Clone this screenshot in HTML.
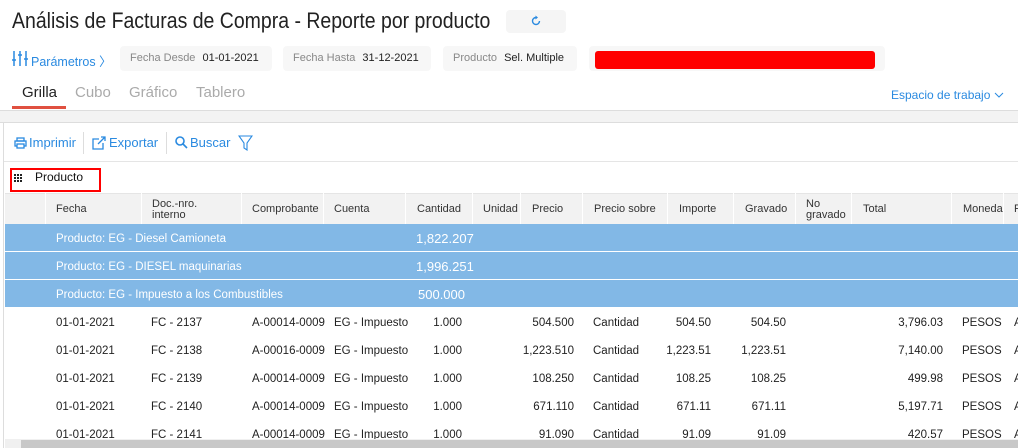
<!DOCTYPE html>
<html><head><meta charset="utf-8"><style>
*{box-sizing:border-box;margin:0;padding:0}
body{width:1018px;height:448px;overflow:hidden;background:#fff;font-family:"Liberation Sans",sans-serif;position:relative;color:#222}
.a{position:absolute;white-space:nowrap}
.chip{position:absolute;top:46px;height:25px;background:#f7f7f7;border-radius:4px;font-size:11px;line-height:25px;padding-left:10px;color:#888}
.chip b{font-weight:normal;color:#222;margin-left:4px}
.tab{position:absolute;top:84px;font-size:15px;color:#aaa}
.tb{position:absolute;top:135px;font-size:13px;color:#2a8ae0}
.h{position:absolute;top:193px;height:31px;font-size:11px;color:#333;line-height:33px;border-left:1px solid #fff}
.h.two{line-height:11px;padding-top:6px}
.g{position:absolute;left:5px;width:1013px;height:27px;background:#82b8e6;color:#fff;font-size:11.5px;line-height:30px}
.r{position:absolute;font-size:11.5px;color:#222;margin-top:1px}
</style></head><body>
<div class="a" style="left:12px;top:8px;font-size:22px;color:#222;transform:scaleX(0.885);transform-origin:0 0">Análisis de Facturas de Compra - Reporte por producto</div>
<div class="a" style="left:506px;top:10px;width:60px;height:23px;background:#f5f5f5;border-radius:4px"></div>
<svg class="a" style="left:530px;top:15px" width="12" height="12" viewBox="0 0 12 12"><path d="M9.5 6A3.5 3.5 0 1 1 6 2.5" fill="none" stroke="#2a8ae0" stroke-width="1.4"/><path d="M5.5 0.5L8 2.5L5.5 4.5z" fill="#2a8ae0"/></svg>
<svg class="a" style="left:12px;top:51px" width="16" height="15" viewBox="0 0 16 15"><g stroke="#2a8ae0" stroke-width="1.5"><path d="M2 0v15M8 0v15M14 0v15"/><path d="M0 9h4M6 4h4M12 8h4"/></g></svg>
<div class="a" style="left:31px;top:51px;font-size:12.5px;color:#2a8ae0">Parámetros 〉</div>
<div class="chip" style="left:120px;width:152px">Fecha Desde <b>01-01-2021</b></div>
<div class="chip" style="left:283px;width:148px">Fecha Hasta <b>31-12-2021</b></div>
<div class="chip" style="left:443px;width:134px">Producto <b>Sel. Multiple</b></div>
<div class="a" style="left:589px;top:46px;width:296px;height:25px;background:#f7f7f7;border-radius:4px"></div>
<div class="a" style="left:595px;top:51px;width:280px;height:18px;background:#f00;border-radius:3px"></div>
<div class="tab" style="left:22px;color:#222">Grilla</div>
<div class="a" style="left:12px;top:106px;width:54px;height:3px;background:#e05040"></div>
<div class="tab" style="left:75px">Cubo</div>
<div class="tab" style="left:129px">Gráfico</div>
<div class="tab" style="left:196px">Tablero</div>
<div class="a" style="left:891px;top:88px;font-size:12px;color:#2a8ae0">Espacio de trabajo</div>
<svg class="a" style="left:994px;top:92px" width="10" height="7" viewBox="0 0 10 7"><path d="M1 1l4 4 4-4" fill="none" stroke="#2a8ae0" stroke-width="1"/></svg>
<div class="a" style="left:0;top:110px;width:1018px;height:13px;background:#f3f3f3;border-top:1px solid #ddd;border-bottom:1px solid #ddd"></div>
<div class="a" style="left:3px;top:123px;width:1px;height:325px;background:#ddd"></div>
<svg class="a" style="left:14px;top:137px" width="13" height="12" viewBox="0 0 13 12"><g fill="none" stroke="#2a8ae0" stroke-width="1.3"><rect x="3" y="1" width="7" height="3"/><rect x="1" y="4" width="11" height="5"/><rect x="3" y="7" width="7" height="4" fill="#fff"/></g></svg>
<div class="tb" style="left:29px">Imprimir</div>
<div class="a" style="left:83px;top:132px;width:1px;height:22px;background:#ddd"></div>
<svg class="a" style="left:92px;top:136px" width="15" height="14" viewBox="0 0 15 14"><g fill="none" stroke="#2a8ae0" stroke-width="1.3"><path d="M7 3H1v10h10V7"/><path d="M6 8L13 1M9 1h4v4"/></g></svg>
<div class="tb" style="left:109px">Exportar</div>
<div class="a" style="left:166px;top:132px;width:1px;height:22px;background:#ddd"></div>
<svg class="a" style="left:175px;top:136px" width="13" height="13" viewBox="0 0 13 13"><g fill="none" stroke="#2a8ae0" stroke-width="1.6"><circle cx="5" cy="5" r="4"/><path d="M8 8l4 4"/></g></svg>
<div class="tb" style="left:190px">Buscar</div>
<svg class="a" style="left:238px;top:135px" width="15" height="16" viewBox="0 0 15 16"><path d="M1 1h13L9 8v7L6 13V8z" fill="none" stroke="#2a8ae0" stroke-width="1.1"/></svg>
<div class="a" style="left:4px;top:161px;width:1014px;height:1px;background:#e5e5e5"></div>
<div class="a" style="left:10px;top:168px;width:91px;height:24px;border:2px solid #f00"></div>
<svg class="a" style="left:14px;top:174px" width="8" height="8"><g fill="#222"><rect x="0" y="0" width="2" height="2"/><rect x="3" y="0" width="2" height="2"/><rect x="6" y="0" width="2" height="2"/><rect x="0" y="3" width="2" height="2"/><rect x="3" y="3" width="2" height="2"/><rect x="6" y="3" width="2" height="2"/><rect x="0" y="6" width="2" height="2"/><rect x="3" y="6" width="2" height="2"/><rect x="6" y="6" width="2" height="2"/></g></svg>
<div class="a" style="left:35px;top:170px;font-size:12px;color:#111">Producto</div>
<div class="a" style="left:5px;top:193px;width:1013px;height:31px;background:#f2f2f2;border-top:1px solid #e5e5e5"></div>
<div class="h" style="left:45px;width:96px;padding-left:10px">Fecha</div>
<div class="h two" style="left:141px;width:100px;padding-left:10px">Doc.-nro.<br>interno</div>
<div class="h" style="left:241px;width:84px;padding-left:10px">Comprobante</div>
<div class="h" style="left:323px;width:82px;padding-left:10px">Cuenta</div>
<div class="h" style="left:405px;width:67px;padding-left:11px">Cantidad</div>
<div class="h" style="left:472px;width:48px;padding-left:10px">Unidad</div>
<div class="h" style="left:520px;width:62px;padding-left:11px">Precio</div>
<div class="h" style="left:582px;width:85px;padding-left:11px">Precio sobre</div>
<div class="h" style="left:667px;width:66px;padding-left:11px">Importe</div>
<div class="h" style="left:733px;width:62px;padding-left:11px">Gravado</div>
<div class="h two" style="left:795px;width:56px;padding-left:10px">No<br>gravado</div>
<div class="h" style="left:851px;width:100px;padding-left:11px">Total</div>
<div class="h" style="left:951px;width:52px;padding-left:11px">Moneda</div>
<div class="h" style="left:1003px;width:20px;padding-left:10px">P</div>
<div class="g" style="top:224px"><span class="a" style="left:51px">Producto: EG - Diesel Camioneta</span><span class="a" style="left:411px;font-size:13px">1,822.207</span></div>
<div class="g" style="top:252px"><span class="a" style="left:51px">Producto: EG - DIESEL maquinarias</span><span class="a" style="left:411px;font-size:13px">1,996.251</span></div>
<div class="g" style="top:280px"><span class="a" style="left:51px">Producto: EG - Impuesto a los Combustibles</span><span class="a" style="left:413px;font-size:13px">500.000</span></div>
<div class="r" style="top:316px;left:56px">01-01-2021</div><div class="r" style="top:316px;left:151px">FC - 2137</div><div class="r" style="top:316px;left:252px">A-00014-0009</div><div class="r" style="top:316px;left:334px">EG - Impuesto</div><div class="r" style="top:316px;right:556px">1.000</div><div class="r" style="top:316px;right:444px">504.500</div><div class="r" style="top:316px;left:593px">Cantidad</div><div class="r" style="top:316px;right:307px">504.50</div><div class="r" style="top:316px;right:232px">504.50</div><div class="r" style="top:316px;right:75px">3,796.03</div><div class="r" style="top:316px;left:962px">PESOS</div><div class="r" style="top:316px;left:1014px">A</div>
<div class="r" style="top:344px;left:56px">01-01-2021</div><div class="r" style="top:344px;left:151px">FC - 2138</div><div class="r" style="top:344px;left:252px">A-00016-0009</div><div class="r" style="top:344px;left:334px">EG - Impuesto</div><div class="r" style="top:344px;right:556px">1.000</div><div class="r" style="top:344px;right:444px">1,223.510</div><div class="r" style="top:344px;left:593px">Cantidad</div><div class="r" style="top:344px;right:307px">1,223.51</div><div class="r" style="top:344px;right:232px">1,223.51</div><div class="r" style="top:344px;right:75px">7,140.00</div><div class="r" style="top:344px;left:962px">PESOS</div><div class="r" style="top:344px;left:1014px">A</div>
<div class="r" style="top:372px;left:56px">01-01-2021</div><div class="r" style="top:372px;left:151px">FC - 2139</div><div class="r" style="top:372px;left:252px">A-00014-0009</div><div class="r" style="top:372px;left:334px">EG - Impuesto</div><div class="r" style="top:372px;right:556px">1.000</div><div class="r" style="top:372px;right:444px">108.250</div><div class="r" style="top:372px;left:593px">Cantidad</div><div class="r" style="top:372px;right:307px">108.25</div><div class="r" style="top:372px;right:232px">108.25</div><div class="r" style="top:372px;right:75px">499.98</div><div class="r" style="top:372px;left:962px">PESOS</div><div class="r" style="top:372px;left:1014px">A</div>
<div class="r" style="top:400px;left:56px">01-01-2021</div><div class="r" style="top:400px;left:151px">FC - 2140</div><div class="r" style="top:400px;left:252px">A-00014-0009</div><div class="r" style="top:400px;left:334px">EG - Impuesto</div><div class="r" style="top:400px;right:556px">1.000</div><div class="r" style="top:400px;right:444px">671.110</div><div class="r" style="top:400px;left:593px">Cantidad</div><div class="r" style="top:400px;right:307px">671.11</div><div class="r" style="top:400px;right:232px">671.11</div><div class="r" style="top:400px;right:75px">5,197.71</div><div class="r" style="top:400px;left:962px">PESOS</div><div class="r" style="top:400px;left:1014px">A</div>
<div class="r" style="top:428px;left:56px">01-01-2021</div><div class="r" style="top:428px;left:151px">FC - 2141</div><div class="r" style="top:428px;left:252px">A-00014-0009</div><div class="r" style="top:428px;left:334px">EG - Impuesto</div><div class="r" style="top:428px;right:556px">1.000</div><div class="r" style="top:428px;right:444px">91.090</div><div class="r" style="top:428px;left:593px">Cantidad</div><div class="r" style="top:428px;right:307px">91.09</div><div class="r" style="top:428px;right:232px">91.09</div><div class="r" style="top:428px;right:75px">420.57</div><div class="r" style="top:428px;left:962px">PESOS</div><div class="r" style="top:428px;left:1014px">A</div>
<div class="a" style="left:5px;top:439px;width:1013px;height:9px;background:#f0f0f0"></div>
<div class="a" style="left:21px;top:440px;width:997px;height:8px;background:#c8c8c8"></div>
</body></html>
